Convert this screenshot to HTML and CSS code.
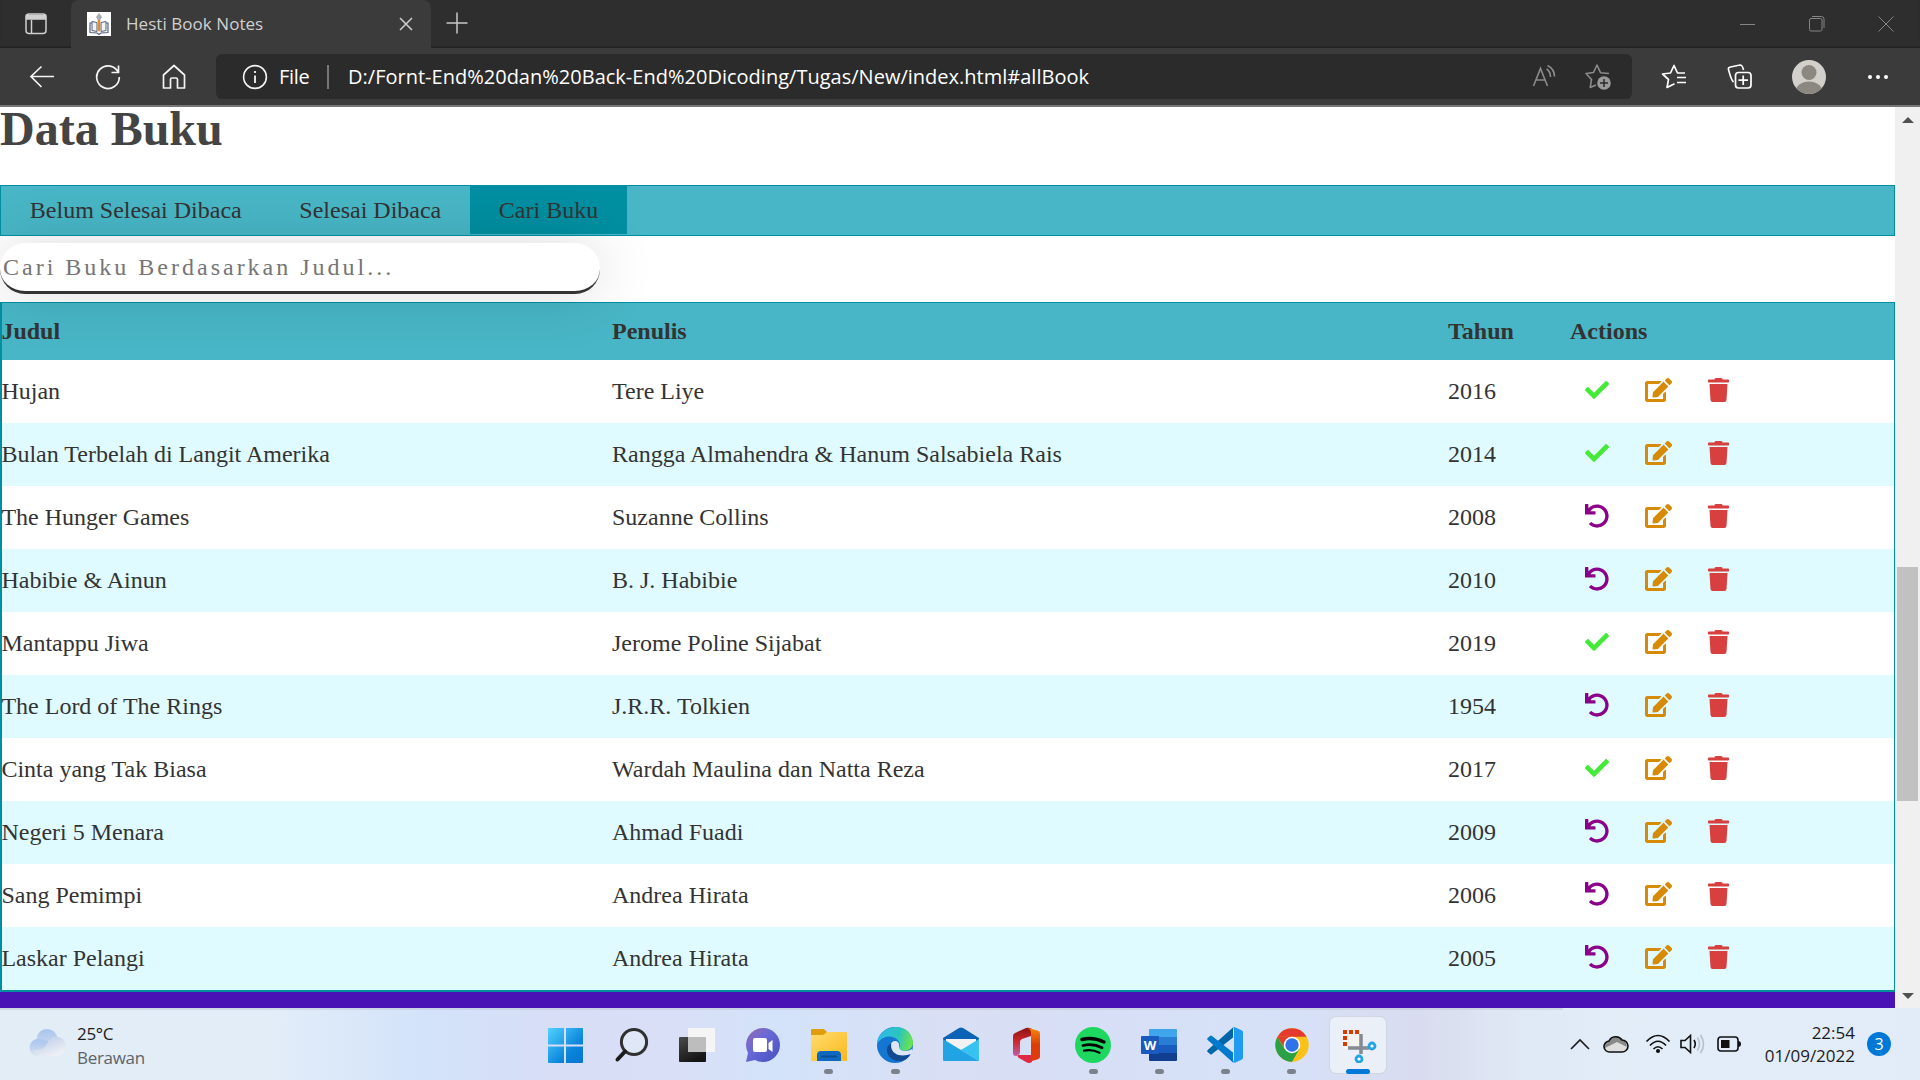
FILE: index.html
```html
<!DOCTYPE html>
<html lang="id">
<head>
<meta charset="utf-8">
<title>Hesti Book Notes</title>
<link rel="stylesheet" href="styles.css">
</head>
<body>
<svg class="defs" aria-hidden="true">
  <defs>
    <symbol id="check" viewBox="0 0 512 512"><path d="M173.898 439.404l-166.4-166.4c-9.997-9.997-9.997-26.206 0-36.204l36.203-36.204c9.997-9.998 26.207-9.998 36.204 0L192 312.69 432.095 72.596c9.997-9.997 26.207-9.997 36.204 0l36.203 36.204c9.997 9.997 9.997 26.206 0 36.204l-294.4 294.401c-9.998 9.997-26.207 9.997-36.204-.001z"/></symbol>
    <symbol id="undo" viewBox="0 0 512 512"><path d="M212.333 224.333H12c-6.627 0-12-5.373-12-12V12C0 5.373 5.373 0 12 0h48c6.627 0 12 5.373 12 12v78.112C117.773 39.279 184.26 7.47 258.175 8.007c136.906.994 246.448 111.623 246.157 248.532C504.041 393.258 393.12 504 256.333 504c-64.089 0-122.496-24.313-166.51-64.215-5.099-4.622-5.334-12.554-.467-17.42l33.967-33.967c4.474-4.474 11.662-4.717 16.401-.525C170.76 415.336 211.58 432 256.333 432c97.268 0 176-78.716 176-176 0-97.267-78.716-176-176-176-58.496 0-110.28 28.476-142.274 72.333h98.274c6.627 0 12 5.373 12 12v48c0 6.627-5.373 12-12 12z"/></symbol>
    <symbol id="edit" viewBox="0 0 576 512"><path d="M402.6 83.2l90.2 90.2c3.8 3.8 3.8 10 0 13.8L274.4 405.6l-92.8 10.3c-12.4 1.4-22.9-9.1-21.5-21.5l10.3-92.8L388.8 83.2c3.8-3.8 10-3.8 13.8 0zm162-22.9l-48.8-48.8c-15.2-15.2-39.9-15.2-55.2 0l-35.4 35.4c-3.8 3.8-3.8 10 0 13.8l90.2 90.2c3.8 3.8 10 3.8 13.8 0l35.4-35.4c15.2-15.3 15.2-40 0-55.2zM384 346.2V448H64V128h229.8c3.2 0 6.2-1.3 8.5-3.5l40-40c7.6-7.6 2.2-20.5-8.5-20.5H48C21.5 64 0 85.5 0 112v352c0 26.5 21.5 48 48 48h352c26.5 0 48-21.5 48-48V306.2c0-10.7-12.9-16-20.5-8.5l-40 40c-2.2 2.3-3.5 5.3-3.5 8.5z"/></symbol>
    <symbol id="trash" viewBox="0 0 448 512"><path d="M432 32H312l-9.4-18.7A24 24 0 0 0 281.1 0H166.8a23.72 23.72 0 0 0-21.4 13.3L136 32H16A16 16 0 0 0 0 48v32a16 16 0 0 0 16 16h416a16 16 0 0 0 16-16V48a16 16 0 0 0-16-16zM53.2 467a48 48 0 0 0 47.9 45h245.8a48 48 0 0 0 47.9-45L416 128H32z"/></symbol>
  </defs>
</svg>

<header class="browser">
  <div class="tabstrip">
    <svg class="tab-menu" width="24" height="24" fill="none" stroke="#cfcfcf" stroke-width="1.5"><rect x="2" y="2" width="20" height="19.5" rx="3"/><path d="M2.500 3.500h19v3.500h-19z" fill="#cfcfcf"/><path d="M7.500 8v13"/></svg>
    <div class="tab">
      <svg class="favicon" width="24" height="24"><path fill="#fff" d="M0 0h24v24H0z"/><path fill="#f1f3f8" stroke="#56617f" d="M5 9.500l5 1v9l-5-1zM19 9.500l-5 1v9l5-1z"/><path stroke="#56617f" stroke-width="1.200" d="M5 11H3v9.500l7 .5 2 1.500 2-1.500 7-.5V11h-2" fill="none"/><path fill="#d9902f" d="M10.700 8h2.600v10l-1.300 2-1.300-2z"/><path fill="#a9aeb5" d="M12 1l3 4-1.700 3h-2.600L9 5z"/></svg>
      <span class="tab-title">Hesti Book Notes</span>
      <svg class="tab-close" width="14" height="14" stroke="#d0d0d0" stroke-width="1.500"><path d="M1 1l12 12M13 1L1 13"/></svg>
    </div>
    <svg class="new-tab" width="22" height="22" stroke="#c8c8c8" stroke-width="1.500"><path d="M11 .5v21M.5 11h21"/></svg>
    <div class="window-buttons">
      <svg width="16" height="16" stroke="#858585"><path d="M0 8.500h15"/></svg>
      <svg width="16" height="16" stroke="#858585" fill="none"><rect x=".5" y="2.500" width="12.500" height="12.500" rx="1.500"/><path d="M3 .5h9.500q2.500 0 2.500 2.500v9"/></svg>
      <svg width="16" height="16" stroke="#858585"><path d="M.5.5l15 15M15.500.5l-15 15"/></svg>
    </div>
  </div>
  <div class="toolbar">
    <div class="nav-buttons">
      <svg width="26" height="26" fill="none" stroke="#f4f4f4" stroke-width="1.700"><path d="M25 12.500H2M12.500 2.500L2 12.500 12.500 23"/></svg>
      <svg width="26" height="26" fill="none" stroke="#f4f4f4" stroke-width="1.700"><path d="M23.500 9A11.300 11.300 0 1 0 24.300 13M23.500 1.500v7h-7"/></svg>
      <svg width="26" height="26" fill="none" stroke="#f4f4f4" stroke-width="1.700" stroke-linejoin="round"><path d="M2.500 11L13 1.500 23.500 11v13h-7v-8.500q0-1.500-1.500-1.500h-4q-1.500 0-1.500 1.500V24h-7z"/></svg>
    </div>
    <div class="address">
      <svg width="26" height="26" fill="none" stroke="#f4f4f4" stroke-width="1.600"><circle cx="13" cy="13" r="11.400"/><path d="M13 11.500V19M13 7v2" stroke-width="1.800"/></svg>
      <span class="scheme">File</span>
      <i class="divider"></i>
      <span class="url">D:/Fornt-End%20dan%20Back-End%20Dicoding/Tugas/New/index.html#allBook</span>
      <svg class="read-aloud" width="26" height="26" fill="none" stroke="#8b8b8b" stroke-width="1.600"><path d="M1.500 22L8.500 4.500 15.500 22M4 16h9M14.500 5q4 2.500 4 8M15.500 1.500q7 3.500 7 11"/></svg>
      <svg class="add-fav" width="28" height="28"><path fill="none" stroke="#8b8b8b" stroke-width="1.600" stroke-linejoin="round" d="M25 10.500L16.500 9.700 13 2 9.500 9.500 2 10.500l5.500 6-1.300 8 5.800-2.500"/><circle cx="20" cy="20" r="6.800" fill="#9a9a9a"/><path stroke="#2b2b2b" stroke-width="1.500" d="M20 16v8M16 20h8"/></svg>
    </div>
    <div class="tools">
      <svg width="28" height="28" fill="none" stroke="#fff" stroke-width="1.700" stroke-linejoin="round"><path d="M25 10h-7.500L14 2.500 10.500 10 2.500 11l6 5.500L7 24.500l7.500-3.800M17 14.500h9M17 19.500h9"/></svg>
      <svg width="28" height="28" fill="none" stroke="#fff" stroke-width="1.700"><rect x="9.500" y="9.500" width="15.500" height="15.500" rx="3"/><path d="M17.200 12.500v9.500M12.500 17.200h9.500M7.500 19C5 17 3.500 10 2.500 6.500Q2 4.500 4.500 4L14 2q2.500 0 3.500 5"/></svg>
      <svg width="34" height="34"><defs><clipPath id="avatar"><circle cx="17" cy="17" r="17"/></clipPath></defs><g clip-path="url(#avatar)"><path fill="#d3d0cc" d="M0 0h34v34H0z"/><circle cx="17" cy="12.500" r="7.500" fill="#8d8782"/><ellipse cx="17" cy="32" rx="13.500" ry="10.500" fill="#8d8782"/></g></svg>
      <svg width="22" height="6" fill="#fff"><circle cx="3" cy="3" r="2"/><circle cx="11" cy="3" r="2"/><circle cx="19" cy="3" r="2"/></svg>
    </div>
  </div>
</header>

<div class="viewport">
  <main class="page">
    <h1>Data Buku</h1>
    <nav class="book-tabs">
      <a>Belum Selesai Dibaca</a><a>Selesai Dibaca</a><a class="active">Cari Buku</a>
    </nav>
    <input class="search" type="text" placeholder="Cari Buku Berdasarkan Judul...">
    <table class="books">
      <colgroup><col class="c-title"><col class="c-author"><col class="c-year"><col></colgroup>
      <thead><tr><th>Judul</th><th>Penulis</th><th>Tahun</th><th>Actions</th></tr></thead>
      <tbody>
        <tr><td>Hujan</td><td>Tere Liye</td><td>2016</td><td><div class="actions"><svg class="done"><use href="#check"/></svg><svg class="edit"><use href="#edit"/></svg><svg class="trash"><use href="#trash"/></svg></div></td></tr>
        <tr><td>Bulan Terbelah di Langit Amerika</td><td>Rangga Almahendra &amp; Hanum Salsabiela Rais</td><td>2014</td><td><div class="actions"><svg class="done"><use href="#check"/></svg><svg class="edit"><use href="#edit"/></svg><svg class="trash"><use href="#trash"/></svg></div></td></tr>
        <tr><td>The Hunger Games</td><td>Suzanne Collins</td><td>2008</td><td><div class="actions"><svg class="undo"><use href="#undo"/></svg><svg class="edit"><use href="#edit"/></svg><svg class="trash"><use href="#trash"/></svg></div></td></tr>
        <tr><td>Habibie &amp; Ainun</td><td>B. J. Habibie</td><td>2010</td><td><div class="actions"><svg class="undo"><use href="#undo"/></svg><svg class="edit"><use href="#edit"/></svg><svg class="trash"><use href="#trash"/></svg></div></td></tr>
        <tr><td>Mantappu Jiwa</td><td>Jerome Poline Sijabat</td><td>2019</td><td><div class="actions"><svg class="done"><use href="#check"/></svg><svg class="edit"><use href="#edit"/></svg><svg class="trash"><use href="#trash"/></svg></div></td></tr>
        <tr><td>The Lord of The Rings</td><td>J.R.R. Tolkien</td><td>1954</td><td><div class="actions"><svg class="undo"><use href="#undo"/></svg><svg class="edit"><use href="#edit"/></svg><svg class="trash"><use href="#trash"/></svg></div></td></tr>
        <tr><td>Cinta yang Tak Biasa</td><td>Wardah Maulina dan Natta Reza</td><td>2017</td><td><div class="actions"><svg class="done"><use href="#check"/></svg><svg class="edit"><use href="#edit"/></svg><svg class="trash"><use href="#trash"/></svg></div></td></tr>
        <tr><td>Negeri 5 Menara</td><td>Ahmad Fuadi</td><td>2009</td><td><div class="actions"><svg class="undo"><use href="#undo"/></svg><svg class="edit"><use href="#edit"/></svg><svg class="trash"><use href="#trash"/></svg></div></td></tr>
        <tr><td>Sang Pemimpi</td><td>Andrea Hirata</td><td>2006</td><td><div class="actions"><svg class="undo"><use href="#undo"/></svg><svg class="edit"><use href="#edit"/></svg><svg class="trash"><use href="#trash"/></svg></div></td></tr>
        <tr><td>Laskar Pelangi</td><td>Andrea Hirata</td><td>2005</td><td><div class="actions"><svg class="undo"><use href="#undo"/></svg><svg class="edit"><use href="#edit"/></svg><svg class="trash"><use href="#trash"/></svg></div></td></tr>
      </tbody>
    </table>
    <div class="footer-band"></div>
  </main>
  <div class="scrollbar">
    <svg width="12" height="6" fill="#505050"><path d="M0 6L6 0l6 6z"/></svg>
    <div class="track"><div class="thumb"></div></div>
    <svg width="12" height="6" fill="#505050"><path d="M0 0h12L6 6z"/></svg>
  </div>
</div>

<footer class="taskbar">
  <div class="weather">
    <svg width="38" height="30"><defs><linearGradient id="cl" x1="0" y1="0" x2="0" y2="1"><stop offset="0" stop-color="#a9c4ee"/><stop offset="1" stop-color="#d3dff0"/></linearGradient><linearGradient id="cl2" x1="0" y1="0" x2=".7" y2="1"><stop offset="0" stop-color="#b2c5e6"/><stop offset="1" stop-color="#f0f1f5"/></linearGradient></defs><circle cx="18" cy="12.500" r="10.500" fill="url(#cl)"/><path d="M9 12a8.500 8.500 0 0 0 0 17h12V15q-6-3-12-3z" fill="url(#cl)"/><path d="M27 9.500a9.700 9.700 0 0 1 0 19.500H9q-6-1-7.500-6Q15 24 18 17q3-7.500 9-7.500z" fill="url(#cl2)"/></svg>
    <div class="weather-text"><span class="temp">25°C</span><span class="sky">Berawan</span></div>
  </div>
  <div class="apps">
    <div class="app"><svg viewBox="0 0 36 36"><defs><linearGradient id="win" x1="0" y1="0" x2="1" y2="1"><stop offset="0" stop-color="#52d2ff"/><stop offset=".65" stop-color="#0a85dc"/><stop offset="1" stop-color="#0474d0"/></linearGradient></defs><path fill="url(#win)" d="M2 1h15v16.500H1V2q0-1 1-1zM19 1h16q1 0 1 1v15.500H19zM1 19.500h16V36H2q-1 0-1-1zM19 19.500h17V35q0 1-1 1H19z"/></svg></div>
    <div class="app"><svg viewBox="0 0 36 36" fill="none"><circle cx="21" cy="15" r="12.600" fill="#e6ecf8" fill-opacity=".6" stroke="#303030" stroke-width="3"/><path d="M12 24.500L4.500 32.500" stroke="#1c1c1c" stroke-width="4" stroke-linecap="round"/></svg></div>
    <div class="app"><svg viewBox="0 0 36 36"><defs><linearGradient id="tv" x1="0" y1="0" x2=".5" y2="1"><stop offset="0" stop-color="#4b4b4b"/><stop offset="1" stop-color="#151515"/></linearGradient></defs><rect x="0" y="10" width="27" height="25" rx="1" fill="url(#tv)"/><rect x="9" y="1" width="27" height="24" rx="1" fill="#f5f5f5"/><path d="M9 10h18v15H9z" fill="#bdbdbd"/></svg></div>
    <div class="app"><svg viewBox="0 0 36 36"><defs><linearGradient id="chat" x1="0" y1="0" x2=".8" y2=".8"><stop offset="0" stop-color="#966ab0"/><stop offset=".5" stop-color="#6b69d6"/><stop offset="1" stop-color="#5058c8"/></linearGradient></defs><path fill="url(#chat)" d="M18 1a17 17 0 0 1 0 34q-5 0-8-2L1 35l2-9A17 17 0 0 1 18 1z"/><rect x="8" y="11" width="14" height="14" rx="2" fill="#fff"/><path fill="#fff" d="M23.500 16l4-3v12l-4-3z"/></svg></div>
    <div class="app open"><svg viewBox="0 0 36 36"><defs><linearGradient id="fold" x1="0" y1="0" x2="1" y2="1"><stop offset="0" stop-color="#ffdc70"/><stop offset="1" stop-color="#fbb91c"/></linearGradient></defs><path fill="#df9d0c" d="M0 8V3q0-1 1-1h11q1 0 2 1l2 2h18v5z"/><path fill="url(#fold)" d="M0 8h12l4-3h19q1 0 1 1v27q0 1-1 1H1q-1 0-1-1z"/><path fill="#1169bf" d="M6 34v-6q0-4 4-4h16q4 0 4 4v6z"/><path stroke="#064e95" stroke-width="2" stroke-linecap="round" d="M11 29.500h14"/></svg></div>
    <div class="app open"><svg viewBox="0 0 36 36"><defs><linearGradient id="edge" x1="0" y1=".2" x2="1" y2=".4"><stop offset="0" stop-color="#31b8ef"/><stop offset=".6" stop-color="#2ac5bd"/><stop offset="1" stop-color="#6be350"/></linearGradient></defs><circle cx="18" cy="18" r="18" fill="#1476d1"/><path fill="url(#edge)" d="M0 17C1-4 35-7 36 16c0 8-11 10-14 6-1-2 2-3 0-7-3-6-15-9-22 2z"/><path fill="#114a93" d="M10 22c-1 12 18 18 24 4-9 4-18 0-16-10-5 0-8 3-8 6z"/><path fill="#dce6f8" d="M14 18c0-6 9-5 8 1-1 6 9 6 13 3q1 3-1 5c-8 3-20 2-20-9z"/></svg></div>
    <div class="app"><svg viewBox="0 0 36 36"><path fill="#0c62b4" d="M0 11L16 1q2-1 4 0l16 10v4H0z"/><path fill="#f2f2f2" d="M3 12h30v10H3z"/><path fill="#36c3f2" d="M36 12v22L18 23z"/><path fill="#22a4e4" d="M0 12l36 22H1q-1 0-1-1z"/></svg></div>
    <div class="app"><svg viewBox="0 0 36 36"><defs><linearGradient id="off" x1="0" y1="0" x2="0" y2="1"><stop offset="0" stop-color="#8d1310"/><stop offset=".5" stop-color="#ce2930"/><stop offset="1" stop-color="#bc5fa8"/></linearGradient><linearGradient id="off2" x1="0" y1="0" x2="0" y2="1"><stop offset="0" stop-color="#f68b0b"/><stop offset=".5" stop-color="#dc3d05"/><stop offset="1" stop-color="#e03a10"/></linearGradient></defs><path fill="url(#off)" d="M4 9q0-2 2-3L17 1q3-1 6 1l-1 7-9 3q-2 1-2 3v10q0 3-4 4-3 0-3-3z"/><path fill="#e02a45" d="M9 28h14v7q-3 2-6 0l-7-4q-2-1-1-3z"/><path fill="url(#off2)" d="M18 .5l11 3.300q2 .7 2 2.700v23q0 2-2 2.700L18 35.500q4-1 4-4V6q0-4-4-5.500z"/></svg></div>
    <div class="app open"><svg viewBox="0 0 36 36"><circle cx="18" cy="18" r="18" fill="#1ed760"/><path fill="none" stroke="#000" stroke-linecap="round" d="M7 12.500q11-3 22 2.500" stroke-width="3.500"/><path fill="none" stroke="#000" stroke-linecap="round" d="M8 18.500q10-2.500 19 2.300" stroke-width="2.800"/><path fill="none" stroke="#000" stroke-linecap="round" d="M9 23.700q8-1.700 15.500 2" stroke-width="2.300"/></svg></div>
    <div class="app open"><svg viewBox="0 0 36 36"><path fill="#41a5ee" d="M8 3q0-1 1-1h26q1 0 1 1v7H8z"/><path fill="#2b7cd3" d="M8 10h28v8H8z"/><path fill="#185abd" d="M8 18h28v8H8z"/><path fill="#103f91" d="M8 26h28v7q0 1-1 1H9q-1 0-1-1z"/><rect y="9" width="18" height="18" rx="1" fill="#185abd"/><text x="9" y="23" text-anchor="middle" class="word-mark">W</text></svg></div>
    <div class="app open"><svg viewBox="0 0 36 36"><path fill="#0065a9" d="M26 .5v10L5 27q-1 1-2 0l-2.300-2q-1-1 0-2z"/><path fill="#007acc" d="M26 35.500v-10L5 9Q4 8 3 9L.7 11q-1 1 0 2z"/><path fill="#1f9cf0" d="M26 .4Q27-.2 28.500.5L35 3.500q1 .5 1 2v25q0 1.500-1 2L28.500 35.500q-1.500.7-3-.7 1.500 0 1.500-2V3q0-2-1-2.600z"/></svg></div>
    <div class="app open"><svg viewBox="0 0 36 36"><circle cx="18" cy="18" r="16.700" fill="#fbc116"/><path fill="#e33b2e" d="M3.500 9.700a16.700 16.700 0 0 1 29 0H18z"/><path fill="#2aa147" d="M3.500 9.700A16.700 16.700 0 0 0 18 34.700L25.500 22 10.500 22z"/><path fill="#e33b2e" d="M3.500 9.700h29L18 10l-7 12z"/><circle cx="18" cy="18" r="8.300" fill="#fff"/><circle cx="18" cy="18" r="6.700" fill="#2f73e8"/></svg></div>
    <div class="app open active"><svg viewBox="0 0 36 36"><path fill="#f5f3f0" d="M1 3h18v19H1z"/><path fill="none" stroke="#d83b01" stroke-width="4" stroke-dasharray="4 2" d="M1 5h16"/><path fill="none" stroke="#d83b01" stroke-width="4" stroke-dasharray="4 2" d="M3 9v10"/><path fill="none" stroke="#848b93" stroke-width="3.500" d="M6 21h21M19 7v20"/><g fill="#fff" stroke="#22a4e8" stroke-width="2.800"><circle cx="30" cy="19" r="3"/><circle cx="17" cy="32" r="3"/></g></svg></div>
  </div>
  <div class="tray">
    <svg width="20" height="12" fill="none" stroke="#1c1c1c" stroke-width="1.600"><path d="M1 11l9-9 9 9"/></svg>
    <svg class="cloud" width="26" height="20"><path d="M7 17.500a5 5 0 0 1-1-10.500 7.500 7.500 0 0 1 13.500-1 6 6 0 0 1 0 11.500z" fill="#8a8a8a"/><path d="M2 14l12-6 10 5q-1 5-5 5H7q-4 0-5-4z" fill="#dedede"/><path d="M7 18a5.500 5.500 0 0 1-1-11 7.500 7.500 0 0 1 13-1 6 6 0 0 1 0 12z" fill="none" stroke="#111" stroke-width="1.600"/></svg>
    <svg class="wifi" width="26" height="20" fill="none" stroke="#111" stroke-width="1.700"><path d="M1.500 7.500q11.500-12 23 0M5 11.500q8-8.500 16 0M8.500 15q4.500-4.500 9 0"/><circle cx="13" cy="17" r="1.200" fill="#111"/></svg>
    <svg class="sound" width="26" height="20" fill="none" stroke="#111" stroke-width="1.600"><path d="M1 6.500h4l5.500-5v17l-5.500-5H1zM14 6q2.500 4 0 8"/><path stroke="#b5bfca" d="M17.500 3.500q4 6.500 0 13M20.500 1q6 9 0 18"/></svg>
    <svg class="battery" width="26" height="18" fill="none" stroke="#111" stroke-width="1.600"><rect x="1" y="2" width="20" height="14" rx="3"/><path fill="#111" stroke="none" d="M4 5h8.500v8H4zM21 6q3 0 3 3t-3 3z"/></svg>
    <div class="clock"><span>22:54</span><span>01/09/2022</span></div>
    <span class="badge">3</span>
  </div>
</footer>
</body>
</html>
```
FILE: styles.css
```css
* { box-sizing: border-box; }
body { margin: 0; width: 1920px; height: 1080px; overflow: hidden; display: flex; flex-direction: column; background: #fff; font-family: "Open Sans", "Noto Sans", sans-serif; }
svg { display: block; flex: none; }
.defs { position: absolute; width: 0; height: 0; }

/* browser chrome */
.browser { flex: none; height: 107px; background: #3b3b3b; border-bottom: 2px solid #767676; }
.tabstrip { height: 48px; background: #2e2e2e; display: flex; align-items: center; box-shadow: inset 0 -2px 2px -1px #1e1e1e; }
.tab-menu { margin-left: 24px; margin-right: 23px; }
.tab { width: 360px; height: 48px; background: #3b3b3b; border-radius: 8px 8px 0 0; display: flex; align-items: center; padding: 0 18px 0 16px; }
.tab-title { margin: -2px 0 0 15px; flex: 1; font-size: 17px; letter-spacing: .05px; color: #d0d0d0; white-space: nowrap; }
.new-tab { margin: -2px 0 0 15px; }
.window-buttons { margin: -1px 26px 0 auto; display: flex; gap: 53px; }
.toolbar { height: 57px; display: flex; align-items: center; }
.nav-buttons { width: 216px; padding-left: 29px; display: flex; gap: 40px; }
.address { width: 1416px; height: 45px; background: #2b2b2b; border-radius: 6px; display: flex; align-items: center; padding: 0 20px 0 26px; color: #fff; font-size: 20px; white-space: nowrap; }
.scheme { margin-left: 11px; width: 32px; letter-spacing: -.3px; }
.divider { width: 2px; height: 24px; background: #777; margin: 0 19px 0 16px; }
.url { flex: 1; letter-spacing: .01px; }
.read-aloud { margin-right: 26px; }
.tools { flex: 1; display: flex; align-items: center; padding-left: 28px; }
.tools svg { margin-right: 38px; }
.tools svg:nth-child(3) { margin-right: 41px; }
.tools svg:last-child { margin-right: 0; }

/* page */
.viewport { height: 901px; display: flex; }
.page { width: 1895px; font-family: "Liberation Serif", "Times New Roman", serif; font-size: 24px; color: #333; display: flex; flex-direction: column; }
h1 { margin: 0; height: 78px; font-size: 48px; line-height: 44px; color: #444; }
.book-tabs { height: 51px; border: 1px solid #008fa1; background: #48b6c6; display: flex; }
.book-tabs a { height: 48px; line-height: 49px; padding: 0 28.800px; }
.book-tabs .active { background: #008fa1; }
.search { width: 600px; height: 51px; margin: 7px 0 8px; border: 0; border-bottom: 3px solid #333; border-radius: 25px; padding: 1px 3px; background: #fff; font: 24px "Liberation Serif", "Times New Roman", serif; letter-spacing: 3px; box-shadow: 0 0 60px rgba(0,0,0,.15); position: relative; z-index: 1; }
.search::placeholder { color: #757575; }
.books { width: 1895px; height: 690px; table-layout: fixed; border-collapse: separate; border-spacing: 0; border: 1px solid #008fa1; border-left-width: 2px; border-bottom-width: 2px; }
.c-title { width: 610px; }
.c-author { width: 836px; }
.c-year { width: 122px; }
th, td { padding: 0; text-align: left; white-space: nowrap; }
th:first-child, td:first-child { text-indent: -.6px; }
th { height: 57px; background: #48b6c6; }
td { height: 63px; }
tbody tr:nth-child(even) { background: #dffbff; }
.actions { display: flex; align-items: center; padding: 0 0 3px 15px; }
.actions svg { height: 24px; }
.done, .undo { width: 24px; margin-right: 36px; }
.done { fill: #45ea38; }
.undo { fill: #8b008b; }
.edit { width: 27px; fill: #d68a06; margin-right: 36px; }
.trash { width: 21px; fill: #d83f3f; }
.footer-band { height: 16px; background: #4912b5; }

.scrollbar { width: 25px; background: #f0f0f0; display: flex; flex-direction: column; align-items: center; padding: 10px 0 9px; }
.track { flex: 1; width: 21px; padding-top: 444px; }
.thumb { height: 234px; background: #c1c1c1; }

/* taskbar */
.taskbar { height: 72px; display: flex; background: linear-gradient(rgba(190,196,210,.5), rgba(190,196,210,.5)) 0 0 / 1563px 2px no-repeat, linear-gradient(90deg, #e2edf6 0, #e2edf8 270px, #d3e3fa 420px, #d7def6 560px, #d8dff6 680px, #d3e3fa 770px, #d9dff4 950px, #d7dff6 1080px, #d6e1f8 1280px, #d9dcef 1420px, #dfe8f5 1520px, #e2edf8 1620px, #e1ecf8 1920px); }
.weather { width: 531.500px; padding-left: 29px; display: flex; }
.weather svg { margin-top: 19px; }
.weather-text { margin: 14px 0 0 10px; display: flex; flex-direction: column; font-size: 17px; line-height: 24px; letter-spacing: -.3px; }
.temp { color: #1c1c1c; }
.sky { color: #5c636b; }
.apps { display: flex; }
.app { width: 66.100px; height: 72px; padding-top: 19px; display: flex; flex-direction: column; align-items: center; position: relative; }
.app svg { width: 36px; height: 36px; position: relative; }
.app.open::after { content: ""; width: 9px; height: 5px; margin-top: 6px; border-radius: 3px; background: #7b828e; position: relative; }
.app.active::before { content: ""; position: absolute; left: 5px; top: 9px; width: 56px; height: 56px; border-radius: 6px; background: #ebeff8; box-shadow: 0 0 0 1px #cfd5e2; }
.app.active svg { left: 2px; }
.app.active::after { width: 24px; background: #0078d7; }
.word-mark { font: bold 13px "Open Sans", sans-serif; fill: #fff; }
.tray { margin-left: auto; padding-right: 29px; display: flex; align-items: center; }
.cloud { margin-left: 13px; }
.wifi { margin-left: 16px; }
.sound { margin-left: 9px; }
.battery { margin-left: 11px; }
.clock { width: 112px; margin-right: 12px; display: flex; flex-direction: column; text-align: right; font-size: 17px; line-height: 23px; letter-spacing: 0; color: #1c1c1c; }
.badge { width: 24px; height: 24px; border-radius: 50%; background: #0078d7; color: #fff; font-size: 16px; line-height: 24px; text-align: center; }
```
